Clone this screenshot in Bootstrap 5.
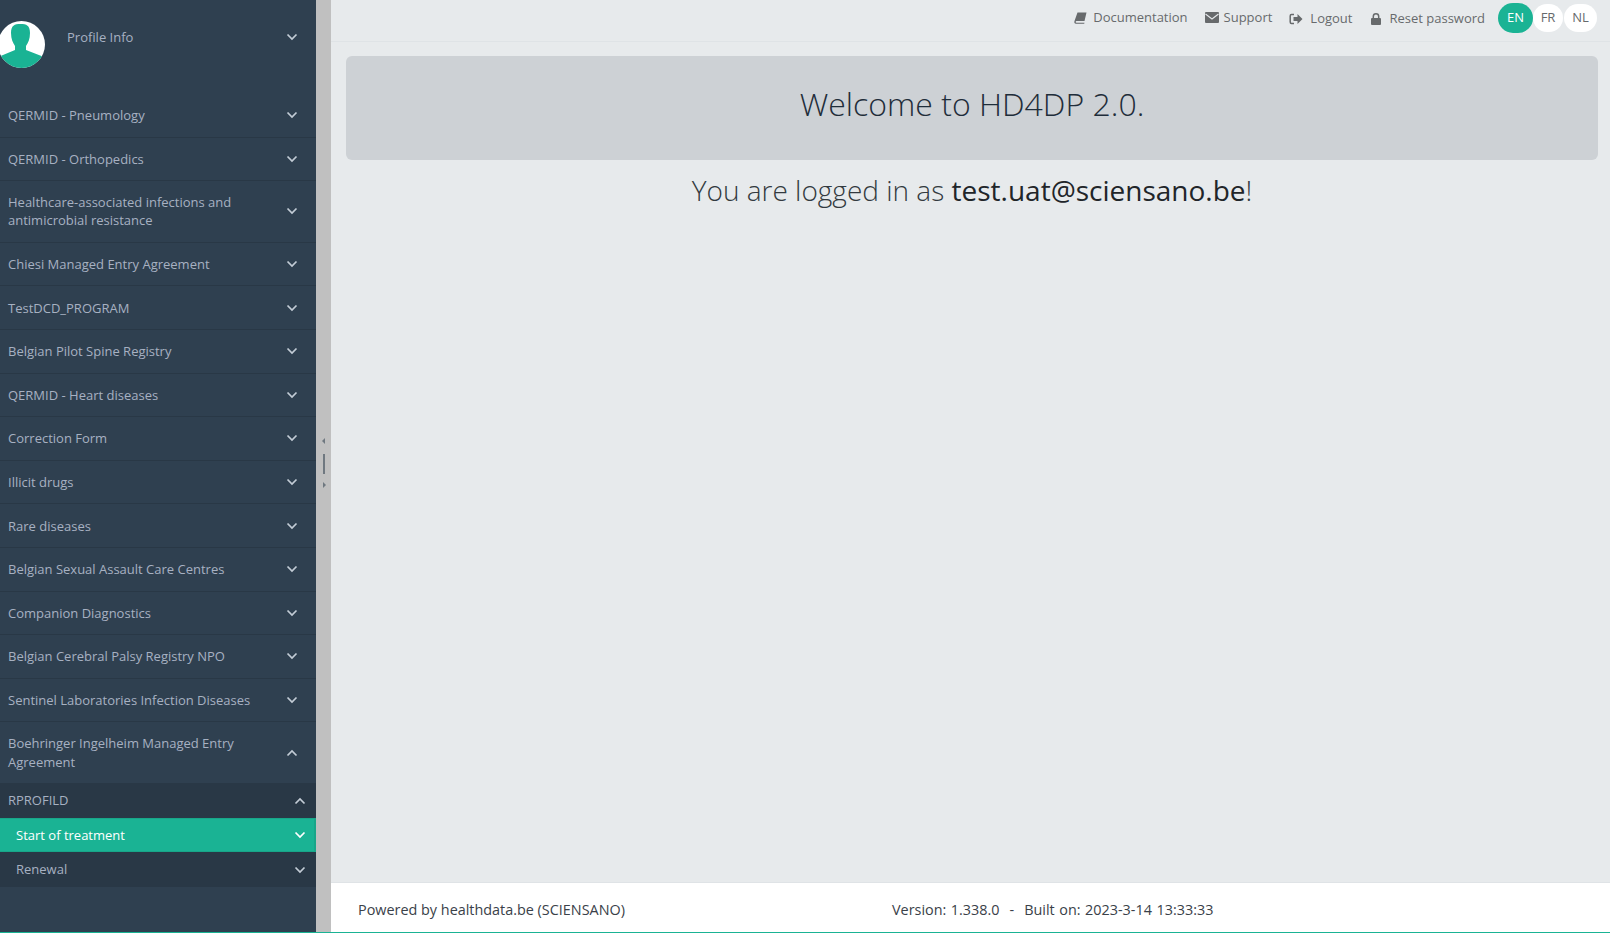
<!DOCTYPE html>
<html lang="en"><head><meta charset="utf-8"><title>HD4DP</title>
<link href="https://cdn.jsdelivr.net/npm/bootstrap@5.3.0/dist/css/bootstrap.min.css" rel="stylesheet">
<style>
html,body{height:100%;overflow:hidden}
body{font-family:"Open Sans",sans-serif;font-size:13px;background:#e7eaec;color:#676a6c}
.pagewrap{height:100vh;border-bottom:1px solid #1ab394}
.side{width:316px;background:#2f4050;color:#a7b1c2;flex:none}
.split{width:15px;background:#c0c0c0;flex:none;position:relative}
.split i{display:block;position:absolute;left:7px;top:454px;width:2px;height:20px;background:#6f7880}
.split b{position:absolute;width:0;height:0;border-style:solid;border-width:3px}
.split .au{top:438px;border-color:transparent #6f7880 transparent transparent;left:3px}
.split .ad{top:482px;border-color:transparent transparent transparent #6f7880;left:7px}
.prof{height:94px;flex:none;padding-left:67px;padding-right:18px;position:relative}
.avat{position:absolute;left:-2px;top:21px;width:47px;height:47px}
.prof span{margin-top:-18px}
.prof svg.chev{margin-top:-21px}
.mrow{padding:12.3px 18px 12.3px 8px;border-bottom:1px solid #293846;line-height:18px}
.mrow.open{border-bottom:0;padding:12px 18px 11px 8px;line-height:19px}
.subw{background:#293846}
.srow{height:35px;padding:0 10px 0 8px}
.srow.deep{padding-left:16px}
.srow.act{background:#1ab394;color:#fff;height:34px;padding-right:8px;border-right:2px solid #18a689;border-top:1px solid #18a689;border-bottom:1px solid #18a689}
.chev{width:12px;height:8px;flex:none}
.mainc{min-width:0}
.topb{height:42px;border-bottom:1px solid #dfe3e6;padding:0 13px 2px 0;gap:17px}
.tlink{padding-bottom:4px}
.tlink.low{padding-bottom:2px}
.ic{flex:none}
.ic-book{width:13px;height:12px;margin-right:6px}
.ic-mail{width:14px;height:11px;margin-right:5px}
.ic-out{width:14px;height:12px;margin-right:7px}
.ic-lock{width:10px;height:12px;margin:0 8px 0 2px}
.lang{margin:0 0 3px -4px}
.lbtn{height:28px;width:30px;border-radius:14px;background:#fff}
.lbtn.nlb{width:33px;margin-left:1px}
.lbtn.cur{background:#1ab394;color:#fff;height:30px;width:35px;border-radius:15px}
.hero{margin:14px 12px 0 15px;height:104px;padding-bottom:8px;background:#cdd1d5;border-radius:6px;font-size:32px;font-weight:300;color:#1f2d3a}
.logged{font-size:28px;font-weight:300;text-align:center;margin-top:9px;color:#333a40;line-height:42px;padding-left:3px}
.logged strong{font-weight:400;color:#212529}
.foot{height:50px;flex:none;background:#fff;border-top:1px solid #dfe3e6;font-size:14.4px;color:#3a4149;padding:5px 0 0 27px;position:relative}
.foot .ver{position:absolute;left:561px;word-spacing:.8px}
.dashs{margin:0 10px}
</style></head>
<body>
<div class="pagewrap d-flex">
<nav class="side d-flex flex-column overflow-hidden">
<div class="prof d-flex align-items-center justify-content-between">
<svg class="avat" viewBox="0 0 47 47"><defs><clipPath id="c"><circle cx="23.5" cy="23.5" r="23.5"/></clipPath></defs><circle cx="23.5" cy="23.500" r="23.500" fill="#fff"/><g clip-path="url(#c)" fill="#1ab394"><path d="M22.500 3c6 0 9.500 1.500 9.500 9 0 6-2 10-4 13v4l18 7v12H0V36l17-7v-4c-2-3-4-7-4-13 0-7.500 3.500-9 9.500-9z"/></g></svg>
<span>Profile Info</span>
<svg class="chev" viewBox="0 0 12 8"><path d="M1.500 1.500 6 6l4.500-4.500" fill="none" stroke="#c3ccd6" stroke-width="1.700"/></svg>
</div>
<div class="mrow d-flex align-items-center justify-content-between"><span>QERMID - Pneumology</span><svg class="chev" viewBox="0 0 12 8"><path d="M1.500 1.500 6 6l4.500-4.500" fill="none" stroke="#c3ccd6" stroke-width="1.700"/></svg></div>
<div class="mrow d-flex align-items-center justify-content-between"><span>QERMID - Orthopedics</span><svg class="chev" viewBox="0 0 12 8"><path d="M1.500 1.500 6 6l4.500-4.500" fill="none" stroke="#c3ccd6" stroke-width="1.700"/></svg></div>
<div class="mrow d-flex align-items-center justify-content-between"><span>Healthcare-associated infections and<br>antimicrobial resistance</span><svg class="chev" viewBox="0 0 12 8"><path d="M1.500 1.500 6 6l4.500-4.500" fill="none" stroke="#c3ccd6" stroke-width="1.700"/></svg></div>
<div class="mrow d-flex align-items-center justify-content-between"><span>Chiesi Managed Entry Agreement</span><svg class="chev" viewBox="0 0 12 8"><path d="M1.500 1.500 6 6l4.500-4.500" fill="none" stroke="#c3ccd6" stroke-width="1.700"/></svg></div>
<div class="mrow d-flex align-items-center justify-content-between"><span>TestDCD_PROGRAM</span><svg class="chev" viewBox="0 0 12 8"><path d="M1.500 1.500 6 6l4.500-4.500" fill="none" stroke="#c3ccd6" stroke-width="1.700"/></svg></div>
<div class="mrow d-flex align-items-center justify-content-between"><span>Belgian Pilot Spine Registry</span><svg class="chev" viewBox="0 0 12 8"><path d="M1.500 1.500 6 6l4.500-4.500" fill="none" stroke="#c3ccd6" stroke-width="1.700"/></svg></div>
<div class="mrow d-flex align-items-center justify-content-between"><span>QERMID - Heart diseases</span><svg class="chev" viewBox="0 0 12 8"><path d="M1.500 1.500 6 6l4.500-4.500" fill="none" stroke="#c3ccd6" stroke-width="1.700"/></svg></div>
<div class="mrow d-flex align-items-center justify-content-between"><span>Correction Form</span><svg class="chev" viewBox="0 0 12 8"><path d="M1.500 1.500 6 6l4.500-4.500" fill="none" stroke="#c3ccd6" stroke-width="1.700"/></svg></div>
<div class="mrow d-flex align-items-center justify-content-between"><span>Illicit drugs</span><svg class="chev" viewBox="0 0 12 8"><path d="M1.500 1.500 6 6l4.500-4.500" fill="none" stroke="#c3ccd6" stroke-width="1.700"/></svg></div>
<div class="mrow d-flex align-items-center justify-content-between"><span>Rare diseases</span><svg class="chev" viewBox="0 0 12 8"><path d="M1.500 1.500 6 6l4.500-4.500" fill="none" stroke="#c3ccd6" stroke-width="1.700"/></svg></div>
<div class="mrow d-flex align-items-center justify-content-between"><span>Belgian Sexual Assault Care Centres</span><svg class="chev" viewBox="0 0 12 8"><path d="M1.500 1.500 6 6l4.500-4.500" fill="none" stroke="#c3ccd6" stroke-width="1.700"/></svg></div>
<div class="mrow d-flex align-items-center justify-content-between"><span>Companion Diagnostics</span><svg class="chev" viewBox="0 0 12 8"><path d="M1.500 1.500 6 6l4.500-4.500" fill="none" stroke="#c3ccd6" stroke-width="1.700"/></svg></div>
<div class="mrow d-flex align-items-center justify-content-between"><span>Belgian Cerebral Palsy Registry NPO</span><svg class="chev" viewBox="0 0 12 8"><path d="M1.500 1.500 6 6l4.500-4.500" fill="none" stroke="#c3ccd6" stroke-width="1.700"/></svg></div>
<div class="mrow d-flex align-items-center justify-content-between"><span>Sentinel Laboratories Infection Diseases</span><svg class="chev" viewBox="0 0 12 8"><path d="M1.500 1.500 6 6l4.500-4.500" fill="none" stroke="#c3ccd6" stroke-width="1.700"/></svg></div>
<div class="mrow open d-flex align-items-center justify-content-between"><span>Boehringer Ingelheim Managed Entry<br>Agreement</span><svg class="chev" viewBox="0 0 12 8"><path d="M1.500 6.500 6 2l4.500 4.500" fill="none" stroke="#c3ccd6" stroke-width="1.700"/></svg></div>
<div class="subw">
<div class="srow d-flex align-items-center justify-content-between"><span>RPROFILD</span><svg class="chev" viewBox="0 0 12 8"><path d="M1.500 6.500 6 2l4.500 4.500" fill="none" stroke="#c3ccd6" stroke-width="1.700"/></svg></div>
<div class="srow deep act d-flex align-items-center justify-content-between"><span>Start of treatment</span><svg class="chev" viewBox="0 0 12 8"><path d="M1.500 1.500 6 6l4.500-4.500" fill="none" stroke="#fff" stroke-width="1.700"/></svg></div>
<div class="srow deep d-flex align-items-center justify-content-between"><span>Renewal</span><svg class="chev" viewBox="0 0 12 8"><path d="M1.500 1.500 6 6l4.500-4.500" fill="none" stroke="#c3ccd6" stroke-width="1.700"/></svg></div>
</div>
</nav>
<div class="split"><b class="au"></b><i></i><b class="ad"></b></div>
<main class="mainc flex-grow-1 d-flex flex-column">
<header class="topb d-flex align-items-center justify-content-end">
<span class="tlink d-flex align-items-center"><svg class="ic ic-book" viewBox="0 0 13 12"><path d="M3.500 .5H12.500L10.500 9H2.500C1.500 9 1.300 10.800 2.500 10.800H10.500L10.200 11.800H2C.5 11.800 0 10.500.5 9z" fill="#676a6c"/></svg>Documentation</span>
<span class="tlink d-flex align-items-center"><svg class="ic ic-mail" viewBox="0 0 14 11"><rect width="14" height="11" rx="1" fill="#676a6c"/><path d="M.5 2 7 7l6.500-5" fill="none" stroke="#e7eaec" stroke-width="1.100"/></svg>Support</span>
<span class="tlink low d-flex align-items-center"><svg class="ic ic-out" viewBox="0 0 14 12"><path d="M5 1.500H2.500Q1.200 1.500 1.200 3V9Q1.200 10.500 2.500 10.500H5" fill="none" stroke="#676a6c" stroke-width="1.500"/><path d="M4.500 4H8.500V1L13.500 6 8.500 11V8H4.500z" fill="#676a6c"/></svg>Logout</span>
<span class="tlink low d-flex align-items-center"><svg class="ic ic-lock" viewBox="0 0 10 12"><rect y="5" width="10" height="7" rx="1" fill="#676a6c"/><path d="M2.300 5.500V3.500a2.700 2.700 0 0 1 5.400 0v2" fill="none" stroke="#676a6c" stroke-width="1.500"/></svg>Reset password</span>
<span class="lang d-flex align-items-center"><span class="lbtn cur d-flex align-items-center justify-content-center">EN</span><span class="lbtn d-flex align-items-center justify-content-center">FR</span><span class="lbtn nlb d-flex align-items-center justify-content-center">NL</span></span>
</header>
<div class="hero d-flex align-items-center justify-content-center">Welcome to HD4DP 2.0.</div>
<div class="logged flex-grow-1">You are logged in as <strong>test.uat@sciensano.be</strong>!</div>
<footer class="foot d-flex align-items-center"><span>Powered by healthdata.be (SCIENSANO)</span><span class="ver">Version: 1.338.0<span class="dashs">-</span>Built on: 2023-3-14 13:33:33</span></footer>
</main>
</div>
<script src="https://cdn.jsdelivr.net/npm/bootstrap@5.3.0/dist/js/bootstrap.bundle.min.js"></script>
</body></html>
